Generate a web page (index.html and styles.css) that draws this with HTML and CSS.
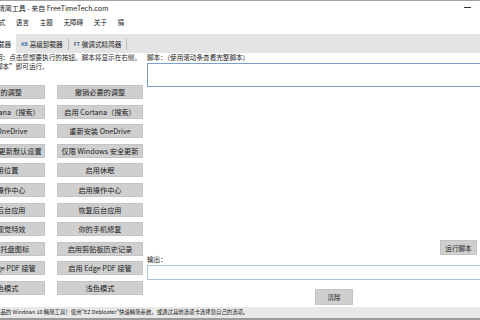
FILE: index.html
```html
<!DOCTYPE html>
<html lang="zh-CN">
<head>
  <meta charset="utf-8">
  <title>Windows 10 精简工具</title>
  <link rel="stylesheet" href="styles.css">
</head>
<body>
  <div class="window">
    <div class="titlebar">
      <svg class="app-icon" viewBox="0 0 10 10"><rect x="1" y="1" width="8" height="8" fill="#2f7bd6"/></svg>
      <span class="title">Windows 10 精简工具 - 来自 FreeTimeTech.com</span>
      <div class="controls">
        <span class="ctl min"></span>
        <span class="ctl max"></span>
        <span class="ctl close"></span>
      </div>
    </div>

    <ul class="menubar">
      <li>文件</li>
      <li>模式</li>
      <li>语言</li>
      <li>主题</li>
      <li>无障碍</li>
      <li>关于</li>
      <li>捐</li>
    </ul>

    <div class="tabs">
      <div class="tab active"><span class="badge ez">EZ</span>简易卸载器</div>
      <div class="tab"><span class="badge ab">AB</span>高级卸载器</div>
      <div class="tab"><span class="badge ft">FT</span>微调式精简器</div>
    </div>

    <div class="main">
      <div class="left">
        <p class="hint">简易模式说明：点击您想要执行的按钮。脚本将显示在右侧。<br>点击“运行脚本”即可运行。</p>
        <div class="actions">
          <button>必要的调整</button>
          <button>撤销必要的调整</button>
          <button>禁用 Cortana（搜索）</button>
          <button>启用 Cortana（搜索）</button>
          <button>卸载 OneDrive</button>
          <button>重新安装 OneDrive</button>
          <button>Windows 更新默认设置</button>
          <button>仅限 Windows 安全更新</button>
          <button>禁用位置</button>
          <button>启用休眠</button>
          <button>禁用操作中心</button>
          <button>启用操作中心</button>
          <button>禁用后台应用</button>
          <button>恢复后台应用</button>
          <button>禁用视觉特效</button>
          <button>你的手机修复</button>
          <button>不隐藏托盘图标</button>
          <button>启用剪贴板历史记录</button>
          <button>禁用 Edge PDF 接管</button>
          <button>启用 Edge PDF 接管</button>
          <button>深色模式</button>
          <button>浅色模式</button>
        </div>
      </div>

      <div class="right">
        <label class="field-label">脚本：（使用滚动条查看完整脚本）</label>
        <div class="script-box"></div>
        <button class="run">运行脚本</button>
        <label class="field-label">输出：</label>
        <div class="output-box"></div>
        <button class="clear">清除</button>
      </div>
    </div>

    <div class="statusbar">欢迎使用 FreeTimeTech 出品的 Windows 10 精简工具！使用"EZ Debloater"快速精简系统，或通过其他选项卡选择您自己的选项。</div>
  </div>
</body>
</html>
```

FILE: styles.css
```css
* {
  box-sizing: border-box;
}
html, body {
  margin: 0;
  height: 320px;
  overflow: hidden;
  background: #fff;
}
body {
  font-family: "Noto Sans CJK SC", "Noto Sans", sans-serif;
  color: #1b1b1b;
}
.window {
  width: 627px;
  height: 320px;
  margin-left: -90px;
  display: flex;
  flex-direction: column;
  border-top: 1px solid #a3a3a3;
  border-bottom: 2px solid #9a9a9a;
}

/* title bar */
.titlebar {
  height: 13px;
  display: flex;
  align-items: center;
  padding-left: 33px;
  font-size: 7px;
  color: #222;
}
.app-icon {
  width: 10px;
  height: 10px;
  margin-right: 4px;
}
.title {
  flex: 1;
  white-space: nowrap;
}
.controls {
  display: flex;
  height: 100%;
}
.ctl {
  width: 28px;
  display: flex;
  align-items: center;
  justify-content: center;
}
.ctl.min::before {
  content: "";
  width: 7px;
  height: 1px;
  background: #333;
}

/* menu */
.menubar {
  list-style: none;
  margin: 0;
  height: 16px;
  padding: 0 0 0 53px;
  display: flex;
  align-items: center;
  font-size: 6.6px;
}
.menubar li {
  padding: 0 5.3px;
}

/* tabs */
.tabs {
  margin-top: 4px;
  height: 19px;
  display: flex;
  align-items: center;
  padding-left: 55px;
  background: #e4e4e4;
  font-size: 6.6px;
}
.tab {
  height: 12px;
  display: flex;
  align-items: center;
  padding: 0 5px;
  border-right: 1px solid #bcbcbc;
  white-space: nowrap;
}
.tab.active {
  height: 19px;
  background: #fff;
  border-right: none;
}
.badge {
  font-size: 5px;
  font-weight: bold;
  margin-right: 2px;
}
.badge.ez,
.badge.ab {
  color: #3f6fb0;
}
.badge.ft {
  color: #52667d;
}

/* main area */
.main {
  flex: 1;
  display: flex;
  padding-left: 53px;
}
.left {
  width: 180px;
}
.hint {
  margin: 0;
  font-size: 6.6px;
  line-height: 9px;
  white-space: nowrap;
}
.actions {
  margin-top: 14px;
  display: grid;
  grid-template-columns: 82px 86px;
  grid-auto-rows: 14px;
  column-gap: 12px;
  row-gap: 5.6px;
}
button {
  font-family: inherit;
  font-size: 7.2px;
  color: #1b1b1b;
  background: #cfcfcf;
  border: 1px solid #c4c4c4;
  padding: 0;
  white-space: nowrap;
  overflow: hidden;
}

.right {
  flex: 1;
  margin-left: 4px;
  padding-right: 8px;
  display: flex;
  flex-direction: column;
  align-items: flex-start;
}
.field-label {
  font-size: 6.6px;
  line-height: 9px;
  white-space: nowrap;
}
.script-box {
  margin-top: 1px;
  width: 100%;
  height: 24px;
  border: 1px solid #7a9fc9;
  background: #fff;
}
.run {
  margin-top: 153px;
  margin-left: 293px;
  width: 37px;
  height: 15px;
  font-size: 6.6px;
}
.output-box {
  margin-top: 1px;
  width: 100%;
  height: 15px;
  border: 1px solid #a9c4dc;
  background: #fff;
}
.clear {
  margin-top: 9px;
  margin-left: 168px;
  width: 38px;
  height: 16px;
  font-size: 6.6px;
}

/* status bar */
.statusbar {
  height: 11px;
  line-height: 11px;
  padding-left: 26px;
  background: #e8e8e8;
  font-size: 5.4px;
  white-space: nowrap;
}
```
